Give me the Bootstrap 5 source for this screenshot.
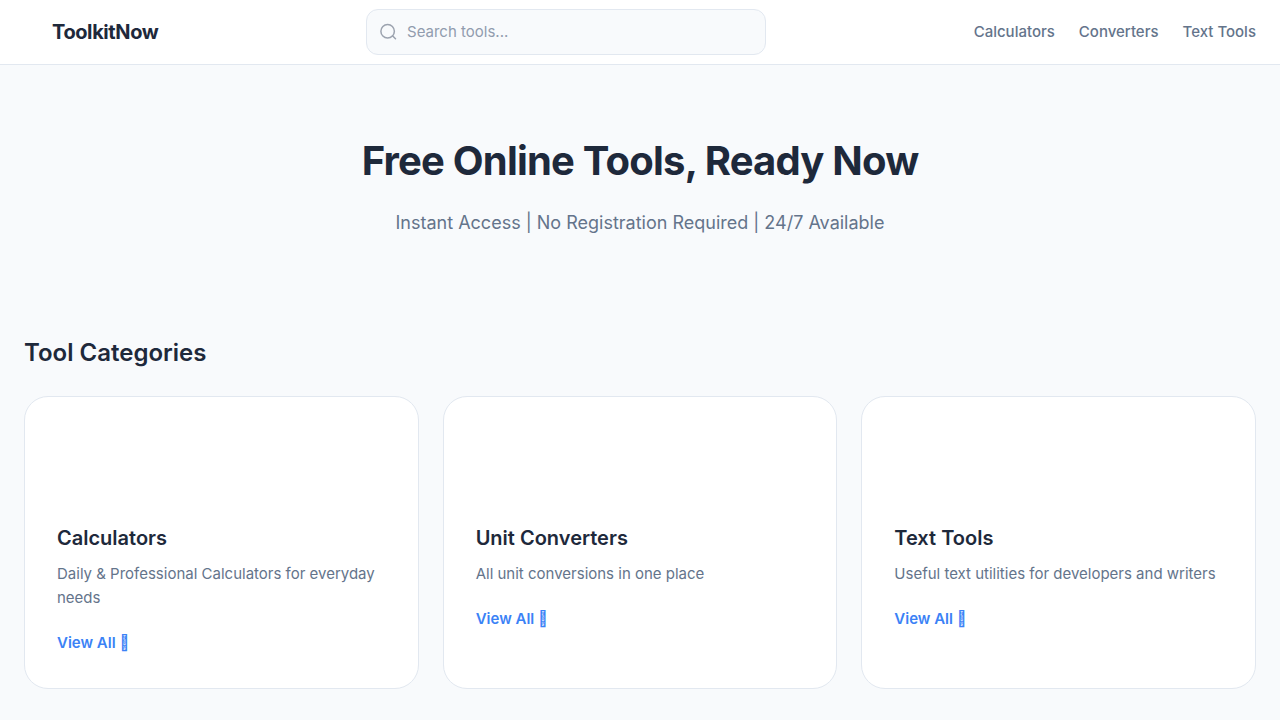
<!DOCTYPE html>
<html lang="en">
<head>
<meta charset="utf-8">
<meta name="viewport" content="width=device-width, initial-scale=1">
<title>ToolkitNow</title>
<link href="https://cdn.jsdelivr.net/npm/bootstrap@5.3.0/dist/css/bootstrap.min.css" rel="stylesheet">
<style>
  body { font-family: Inter, "Liberation Sans", sans-serif; font-size: 15px; line-height: 24px; color: #1e293b; background: #f8fafc; }
  .site-header { min-height: 65px; border-color: #e2e8f0 !important; }
  .brand { font-size: 20px; font-weight: 700; letter-spacing: -0.02em; color: #1e293b; padding-left: 28px; }
  .search { width: 400px; height: 46px; padding: 0 12px; gap: 10px; background: #f8fafc; border: 1px solid #e2e8f0; border-radius: 12px; color: #9ca3af; }
  .search input { font-size: 15px; color: #1e293b; }
  .search input::placeholder { color: #919cae; opacity: 1; }
  .site-nav a { font-weight: 500; color: #64748b; }
  .hero { padding: 64px 24px; }
  .hero h1 { font-size: 40px; line-height: 64px; font-weight: 700; letter-spacing: -0.02em; }
  .hero p { font-size: 18px; line-height: 28px; color: #64748b; }
  .categories { padding: 33px 24px 32px; }
  .section-title { font-size: 24px; line-height: 38px; font-weight: 600; margin-bottom: 24px; }
  .tool-card { border: 1px solid #e2e8f0; border-radius: 24px; padding: 32px 32px 33px; }
  .tool-icon { height: 93px; }
  .tool-card h3 { font-size: 20px; line-height: 32px; font-weight: 600; }
  .tool-card p { color: #64748b; margin-bottom: 21px; }
  .tool-card a { font-weight: 600; color: #3b82f6; }
</style>
</head>
<body>
<header class="site-header bg-white border-bottom d-flex align-items-center justify-content-between px-4">
  <a class="brand text-decoration-none" href="#">ToolkitNow</a>
  <label class="search d-flex align-items-center">
    <svg width="18" height="18" viewBox="0 0 24 24" fill="none" stroke="currentColor" stroke-width="2" stroke-linecap="round" stroke-linejoin="round" aria-hidden="true"><circle cx="11.5" cy="11" r="9"/><path d="M22 21l-4-4"/></svg>
    <input class="border-0 bg-transparent flex-grow-1 p-0" type="search" placeholder="Search tools..." aria-label="Search tools">
  </label>
  <nav class="site-nav d-flex gap-4">
    <a class="text-decoration-none" href="#calculators">Calculators</a>
    <a class="text-decoration-none" href="#converters">Converters</a>
    <a class="text-decoration-none" href="#text-tools">Text Tools</a>
  </nav>
</header>
<main>
  <section class="hero text-center">
    <h1 class="mb-3">Free Online Tools, Ready Now</h1>
    <p class="mb-0">Instant Access | No Registration Required | 24/7 Available</p>
  </section>
  <section class="categories">
    <h2 class="section-title">Tool Categories</h2>
    <div class="row row-cols-3 g-4">
      <div class="col"><article class="tool-card bg-white h-100" id="calculators">
        <div class="tool-icon"></div>
        <h3 class="mb-2">Calculators</h3>
        <p>Daily &amp; Professional Calculators for everyday needs</p>
        <a class="text-decoration-none" href="#calculators">View All &#xF061;</a>
      </article></div>
      <div class="col"><article class="tool-card bg-white h-100" id="converters">
        <div class="tool-icon"></div>
        <h3 class="mb-2">Unit Converters</h3>
        <p>All unit conversions in one place</p>
        <a class="text-decoration-none" href="#converters">View All &#xF061;</a>
      </article></div>
      <div class="col"><article class="tool-card bg-white h-100" id="text-tools">
        <div class="tool-icon"></div>
        <h3 class="mb-2">Text Tools</h3>
        <p>Useful text utilities for developers and writers</p>
        <a class="text-decoration-none" href="#text-tools">View All &#xF061;</a>
      </article></div>
    </div>
  </section>
</main>
<script src="https://cdn.jsdelivr.net/npm/bootstrap@5.3.0/dist/js/bootstrap.bundle.min.js"></script>
</body>
</html>
